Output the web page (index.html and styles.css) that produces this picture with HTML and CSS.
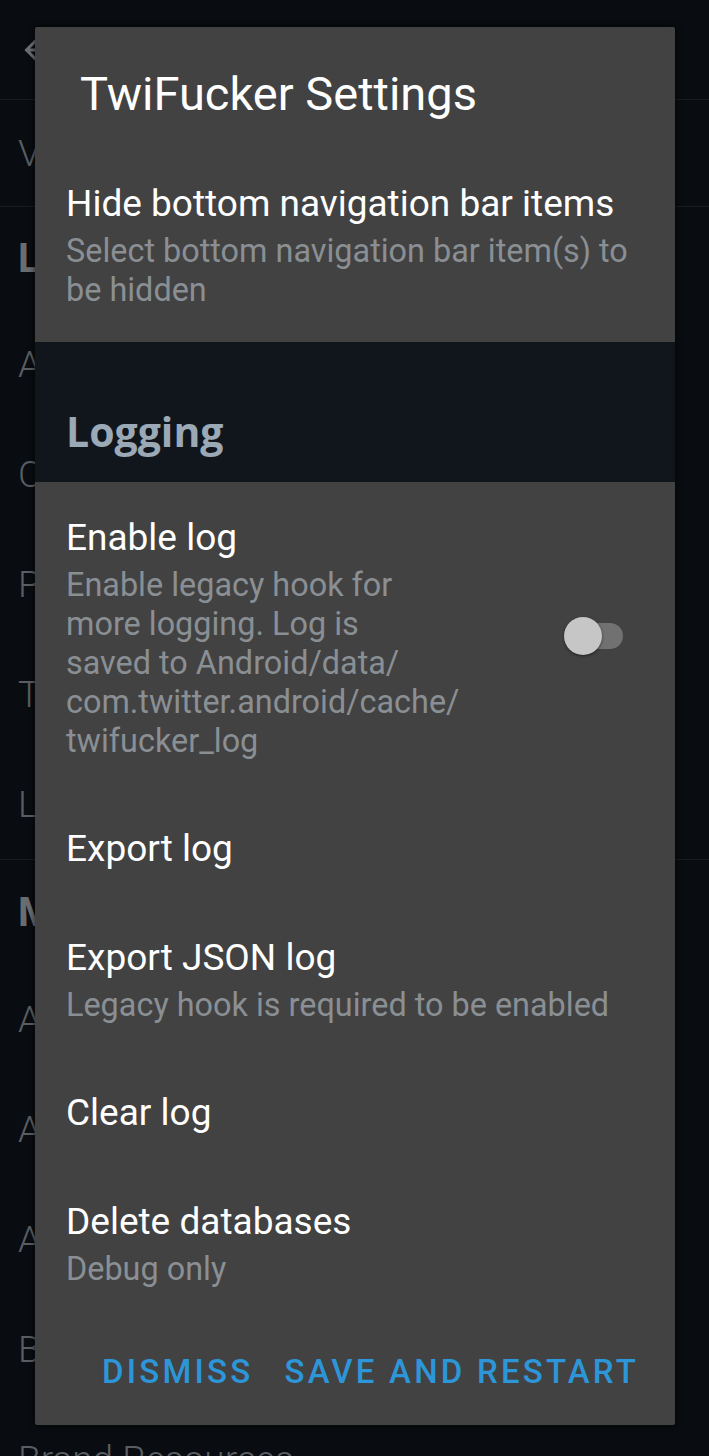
FILE: index.html
```html
<!DOCTYPE html>
<html lang="en">
<head>
    <meta charset="UTF-8">
    <meta name="viewport" content="width=device-width, initial-scale=1.0">
    <title>Additional resources</title>
    <link rel="stylesheet" href="styles.css">
</head>
<body>
    <!-- Page behind the dialog -->
    <div class="screen">
        <div class="topbar">
            <svg class="back" viewBox="0 0 24 24" width="36" height="36">
                <path d="M7.414 13l5.043 5.04-1.414 1.42L3.586 12l7.457-7.46 1.414 1.42L7.414 11H21v2H7.414z"></path>
            </svg>
        </div>
        <div class="bg-row version">Version 9.61.0-release.0</div>

        <div class="bg-section legal">
            <div class="bg-head">Legal</div>
            <div class="bg-row">Ads info</div>
            <div class="bg-row">Cookie Policy</div>
            <div class="bg-row">Privacy Policy</div>
            <div class="bg-row">Terms of Service</div>
            <div class="bg-row">Legal notices</div>
        </div>

        <div class="bg-section">
            <div class="bg-head">Miscellaneous</div>
            <div class="bg-row">About Ads</div>
            <div class="bg-row">Accessibility</div>
            <div class="bg-row">Advertising</div>
            <div class="bg-row">Blog</div>
            <div class="bg-row">Brand Resources</div>
        </div>
    </div>

    <!-- Settings Dialog -->
    <div class="dialog">
        <h1 class="dialog-title">TwiFucker Settings</h1>

        <div class="pref">
            <div class="pref-text">
                <div class="pref-title">Hide bottom navigation bar items</div>
                <div class="pref-summary">Select bottom navigation bar item(s) to be hidden</div>
            </div>
        </div>

        <div class="category">Logging</div>

        <div class="pref pref-switch">
            <div class="pref-text">
                <div class="pref-title">Enable log</div>
                <div class="pref-summary">Enable legacy hook for<br>more logging. Log is<br>saved to Android/data/<br>com.twitter.android/cache/<br>twifucker_log</div>
            </div>
            <div class="switch">
                <span class="track"></span>
                <span class="thumb"></span>
            </div>
        </div>

        <div class="pref">
            <div class="pref-text">
                <div class="pref-title">Export log</div>
            </div>
        </div>

        <div class="pref">
            <div class="pref-text">
                <div class="pref-title">Export JSON log</div>
                <div class="pref-summary">Legacy hook is required to be enabled</div>
            </div>
        </div>

        <div class="pref">
            <div class="pref-text">
                <div class="pref-title">Clear log</div>
            </div>
        </div>

        <div class="pref">
            <div class="pref-text">
                <div class="pref-title">Delete databases</div>
                <div class="pref-summary">Debug only</div>
            </div>
        </div>

        <div class="dialog-buttons">
            <button>Dismiss</button>
            <button>Save and restart</button>
        </div>
    </div>
</body>
</html>
```

FILE: styles.css
```css
body {
    margin: 0;
    padding: 0;
    width: 709px;
    height: 1456px;
    overflow: hidden;
    position: relative;
    background-color: #090c10;
    font-family: Roboto, "Noto Sans", Arial, sans-serif;
}

/* page behind */
.topbar {
    height: 99px;
    border-bottom: 1px solid #181c20;
    display: flex;
    align-items: center;
    padding-left: 19px;
}
.back {
    fill: #6b6f73;
}
.bg-row {
    height: 110px;
    display: flex;
    align-items: center;
    padding-left: 18px;
    font-size: 37px;
    font-weight: 300;
    color: #5a5e62;
    white-space: nowrap;
}
.bg-row.version {
    height: 106px;
    border-bottom: 1px solid #181c20;
}
.bg-head {
    height: 102px;
    display: flex;
    align-items: center;
    padding-left: 18px;
    font-size: 40px;
    font-weight: bold;
    color: #6a6d70;
}
.bg-section.legal {
    border-bottom: 1px solid #181c20;
}
.bg-section.legal + .bg-section .bg-head {
    height: 104px;
}

/* dialog */
.dialog {
    position: absolute;
    top: 27px;
    left: 35px;
    width: 640px;
    background-color: #424242;
    border-radius: 2px;
    box-shadow: 0 0 6px rgba(0, 0, 0, 0.7);
}
.dialog-title {
    margin: 0;
    padding: 40px 45px 27px;
    font-size: 47px;
    font-weight: normal;
    line-height: 54px;
    color: #ffffff;
}
.pref {
    display: flex;
    align-items: center;
    padding: 35px 34px 32px 31px;
}
.pref-text {
    flex: 1;
}
.pref-title {
    font-size: 37px;
    line-height: 42px;
    color: #ffffff;
}
.pref-summary {
    margin-top: 7px;
    font-size: 32.4px;
    line-height: 39px;
    color: #8a8f94;
}
.category {
    height: 140px;
    box-sizing: border-box;
    padding: 65px 31px 0;
    background-color: #11161d;
    font-family: "Open Sans", sans-serif;
    font-size: 41px;
    font-weight: bold;
    line-height: 48px;
    color: #9aa9b5;
}
.switch {
    position: relative;
    width: 59px;
    height: 38px;
    margin-right: 18px;
    margin-bottom: 6px;
}
.switch .track {
    position: absolute;
    left: 9px;
    top: 6px;
    width: 50px;
    height: 26px;
    border-radius: 13px;
    background-color: #717171;
}
.switch .thumb {
    position: absolute;
    left: 0;
    top: 0;
    width: 38px;
    height: 38px;
    border-radius: 50%;
    background-color: #c6c6c6;
    box-shadow: 0 1px 3px rgba(0, 0, 0, 0.5);
}
.dialog-buttons {
    display: flex;
    justify-content: flex-end;
    gap: 31px;
    padding: 30px 36px 32px 0;
}
.dialog-buttons button {
    padding: 0;
    border: none;
    background: none;
    font-family: Roboto, sans-serif;
    font-size: 33px;
    font-weight: 500;
    line-height: 42px;
    letter-spacing: 3.2px;
    text-transform: uppercase;
    color: #2d96d8;
    cursor: pointer;
}
```
